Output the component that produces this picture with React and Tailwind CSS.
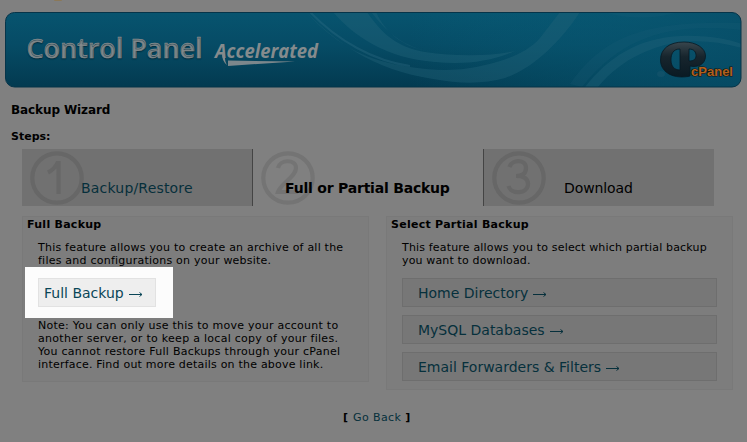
const steps = [
  { n: "1", label: "Backup/Restore", cell: "bg-[#717171] w-[230px]", text: "text-[#062f3b] pl-[59px] tracking-[0.19px]", ring: "#676767" },
  { n: "2", label: "Full or Partial Backup", cell: "w-[231px] border-l border-[#444]", text: "text-black font-bold pl-[32px] tracking-[-0.21px]", ring: "#747474" },
  { n: "3", label: "Download", cell: "bg-[#717171] w-[231px] border-l border-[#444]", text: "text-black pl-[80px] tracking-[-0.1px]", ring: "#676767" },
];

const partial = ["Home Directory", "MySQL Databases", "Email Forwarders & Filters"];

function Arrow() {
  return (
    <svg width="14" height="7" viewBox="0 0 14 7" className="ml-[5px] mt-[1px] shrink-0" fill="none" stroke="currentColor">
      <path d="M0 3.5H13M10.5 1.5L13 3.5L10.5 5.5" />
    </svg>
  );
}

function Lines({ lines }) {
  return (
    <div className="text-[11px] leading-[13px] whitespace-nowrap text-black">
      {lines.map(([text, tracking]) => <div key={text} className={tracking}>{text}</div>)}
    </div>
  );
}

function Banner() {
  return (
    <svg width="737" height="76" viewBox="5 12 737 76" className="block">
      <defs>
        <linearGradient id="sea" x1="0" y1="0" x2="0" y2="1">
          <stop offset="0" stopColor="#07546f" />
          <stop offset=".45" stopColor="#064b65" />
          <stop offset="1" stopColor="#033a50" />
        </linearGradient>
        <linearGradient id="right" x1="0" y1="0" x2="1" y2="0">
          <stop offset=".55" stopColor="#086580" stopOpacity="0" />
          <stop offset="1" stopColor="#08506a" stopOpacity=".75" />
        </linearGradient>
        <linearGradient id="gloss" x1="0" y1="0" x2="0" y2="1">
          <stop offset="0" stopColor="#39464d" />
          <stop offset=".42" stopColor="#17252d" />
          <stop offset="1" stopColor="#0a1a23" />
        </linearGradient>
        <clipPath id="edge"><rect x="5" y="12" width="736" height="75" rx="9" /></clipPath>
      </defs>
      <rect x="5.5" y="12.5" width="735.5" height="74.5" rx="9" fill="url(#sea)" />
      <rect x="5.5" y="12.5" width="735.5" height="74.5" rx="9" fill="url(#right)" />
      <g clipPath="url(#edge)" fill="#24637a">
        <path d="M333 12H367C386 40 403 48 425 52C458 57 492 56 515 51C490 62 464 65 435 62C385 58 354 36 333 12Z" opacity=".42" />
        <path d="M371 12C390 36 407 49 438 53C408 49 388 38 376 12Z" opacity=".4" />
        <path d="M306 12C340 49 370 61 410 67C442 72 466 70 485 65C506 60 527 53 540 38L560 12H580C561 41 534 68 505 78C485 84 460 84 433 79C373 70 336 42 306 12Z" opacity=".38" />
        <path d="M310 12C338 41 374 61 410 66" stroke="#37738a" strokeWidth="2" fill="none" opacity=".3" />
        <path d="M585 87C608 58 637 38 681 36C710 35 730 40 742 44V48C710 39 680 39 655 48C628 57 609 73 598 87Z" opacity=".36" />
        <path d="M570 84C604 35 647 20 742 23V30C675 23 625 33 582 87Z" opacity=".16" />
        <path d="M603 12Q640 23 680 12Z" opacity=".16" />
      </g>
      <rect x="5.5" y="12.5" width="735.5" height="74.5" rx="9" fill="none" stroke="#063449" />

      <text x="26.5" y="58" textLength="176" fontSize="27.5" fontWeight="600" fill="#858b8d" fontFamily="'Open Sans', 'Noto Sans', sans-serif" lengthAdjust="spacingAndGlyphs" stroke="#858b8d" strokeWidth=".6" className="[text-shadow:0_1px_1px_#032d3e]">Control Panel</text>
      <text x="215" y="58" textLength="103" fontSize="19" fontStyle="italic" fontWeight="700" fill="#858b8d" fontFamily="'Open Sans', 'Noto Sans', sans-serif" lengthAdjust="spacingAndGlyphs">Accelerated</text>
      <path d="M222 54L225 55Q224.500 61 227 65Q222 61 222 54Z" fill="#858b8d" />
      <path d="M228 60.500L295 61.500L228 66Z" fill="#7c878c" />

      <ellipse cx="661" cy="74" rx="4" ry="3" fill="#275e75" opacity=".3" />
      <path fillRule="evenodd" fill="url(#gloss)" stroke="#061923" strokeWidth=".8" d="M688 76.500C671 79 660.500 71 660.500 60C660.500 49 669 42 684 42C696 42 705.500 48 705.500 56C705.500 64 698 68 690 66V76ZM680 49C673 49 671 54 671 60C671 66 674 70 680 70ZM689 49V61C694 61 696 59 696 55.500C696 52 694 49 689 49Z" />
      <text x="691" y="76" textLength="42" fontSize="12.5" fontWeight="700" fontFamily="'Liberation Sans', sans-serif" fill="#b2601c" stroke="#111" strokeWidth="1.2" paintOrder="stroke" lengthAdjust="spacingAndGlyphs">cPanel</text>
    </svg>
  );
}

const panel = "w-[347px] bg-[#7d7d7d] border border-[#797979] pl-1";
const heading = "text-[11px] leading-[15px] font-bold tracking-[0.27px] whitespace-nowrap text-black";

export default function App() {
  return (
    <div className="h-[442px] w-[747px] overflow-hidden bg-[#808080] font-['DejaVu_Sans',Verdana,sans-serif]">
      <div className="flex h-3 pl-[54px]"><div className="h-[1px] w-[8px] rounded-b bg-[#8b7858]" /></div>
      <header className="pl-[5px]"><Banner /></header>

      <h1 className="mt-[14px] pl-[11px] text-[12px] leading-4 font-bold tracking-[-0.1px]">Backup Wizard</h1>
      <h2 className="mt-[11px] pl-[11px] text-[11px] leading-4 font-bold">Steps:</h2>

      <nav className="mt-1 ml-[22px] flex h-[57px]">
        {steps.map((s) => (
          <div key={s.n} className={"relative h-full shrink-0 " + s.cell}>
            <svg width="56" height="56" className="absolute top-[1px] left-[7px]" fill="none" stroke={s.ring} strokeWidth="4.2">
              <circle cx="28" cy="28" r="24.7" />
              {s.n === "1" && <path d="M19 22.500Q26 19 29 12M29.500 11V44" />}
              {s.n === "2" && <path d="M18 18C20 9 36 9 36 18C36 27 21 33 18 42H38" />}
              {s.n === "3" && <path d="M18.500 17C21 9 35 9 35 18C35 24 31 26 25 26C33 26 37 29 37 34C37 44 20 45 17.500 36" />}
            </svg>
            <div className={"relative pt-[29px] text-[14px] leading-5 whitespace-nowrap " + s.text}>{s.label}</div>
          </div>
        ))}
      </nav>

      <main className="mt-[10px] ml-[22px] flex items-start gap-[17px]">
        <section className={panel + " h-[166px]"}>
          <h3 className={heading}>Full Backup</h3>
          <div className="mt-[9px] pl-[11px]">
            <Lines lines={[["This feature allows you to create an archive of all the", "tracking-[0.22px]"], ["files and configurations on your website.", "tracking-[0.23px]"]]} />
            <div className="relative flex h-[51px] w-[148px] -ml-[13px] items-start bg-[#fcfcfc] pt-[11px] pl-[13px]">
              <a className="flex h-[29px] w-[118px] items-center border border-[#e2e2e2] bg-[#eee] pt-[2px] pl-[5px] text-[14px] whitespace-nowrap text-[#0a4657]">
                Full Backup<Arrow />
              </a>
            </div>
            <div className="mt-px">
              <Lines lines={[["Note: You can only use this to move your account to", "tracking-[0.25px]"], ["another server, or to keep a local copy of your files.", "tracking-[0.28px]"], ["You cannot restore Full Backups through your cPanel", "tracking-[0.27px]"], ["interface. Find out more details on the above link.", "tracking-[0.21px]"]]} />
            </div>
          </div>
        </section>

        <section className={panel + " h-[174px]"}>
          <h3 className={heading}>Select Partial Backup</h3>
          <div className="mt-[9px] pl-[11px]">
            <Lines lines={[["This feature allows you to select which partial backup", "tracking-[0.17px]"], ["you want to download.", "tracking-[0.15px]"]]} />
            <div className="mt-[11px] flex flex-col gap-2">
              {partial.map((label) => (
                <a key={label} className="flex h-[29px] w-[315px] items-center border border-[#6e6e6e] bg-[#777] pt-[2px] pl-[15px] text-[14px] whitespace-nowrap text-[#06303c]">
                  {label}<Arrow />
                </a>
              ))}
            </div>
          </div>
        </section>
      </main>

      <footer className="mt-5 flex pl-[343px] text-[11px] leading-4">
        <b>[</b><span className="mr-1 ml-[5px] tracking-[0.4px] text-[#06303c]">Go Back</span><b>]</b>
      </footer>
    </div>
  );
}
